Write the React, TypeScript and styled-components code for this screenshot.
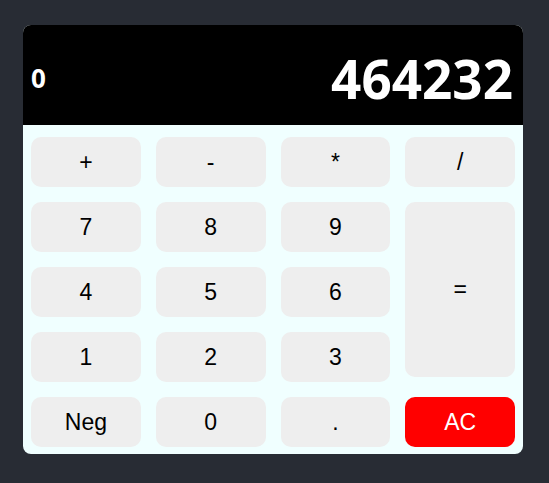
import { useState } from "react";
import styled, { createGlobalStyle } from "styled-components";

const GlobalStyle = createGlobalStyle`
  body {
    margin: 0;
    background-color: #282c34;
    font-family: "Liberation Sans", Arial, sans-serif;
  }
`;

const Page = styled.div`
  min-height: 483px;
  padding: 25px 0 0 23px;
  box-sizing: border-box;
`;

const Calculator = styled.div`
  width: 500px;
  border-radius: 8px;
  overflow: hidden;
  background-color: azure;
`;

const Display = styled.div`
  height: 100px;
  background-color: black;
  color: white;
  display: flex;
  align-items: center;
  justify-content: space-between;
  padding: 6px 10px 0 8px;
  box-sizing: border-box;
  font-family: "Noto Sans", "Open Sans", sans-serif;
  font-weight: bold;
`;

const Previous = styled.span`
  font-size: 26px;
`;

const Current = styled.span`
  font-size: 53px;
`;

const Keypad = styled.div`
  display: grid;
  grid-template-columns: repeat(4, 1fr);
  grid-auto-rows: 50px;
  column-gap: 15px;
  row-gap: 15px;
  padding: 12px 8px 7px 8px;
`;

const Key = styled.button<{ $accent?: boolean; $tall?: boolean }>`
  border: none;
  border-radius: 10px;
  background-color: ${(p) => (p.$accent ? "#ff0000" : "#eeeeee")};
  color: ${(p) => (p.$accent ? "white" : "black")};
  font-family: "Liberation Sans", Arial, sans-serif;
  font-size: 23px;
  cursor: pointer;
  grid-row: ${(p) => (p.$tall ? "span 3" : "auto")};
  height: ${(p) => (p.$tall ? "175px" : "50px")};
  align-self: start;
`;

function App() {
  const [previous, setPrevious] = useState("0");
  const [current, setCurrent] = useState("464232");

  const press = (key: string) => {
    if (key === "AC") {
      setPrevious("0");
      setCurrent("0");
      return;
    }
    if (key === "Neg") {
      setCurrent(current.startsWith("-") ? current.slice(1) : "-" + current);
      return;
    }
    if (key === "=") {
      setPrevious(current);
      return;
    }
    setCurrent(current === "0" ? key : current + key);
  };

  return (
    <>
      <GlobalStyle />
      <Page>
        <Calculator>
          <Display>
            <Previous>{previous}</Previous>
            <Current>{current}</Current>
          </Display>
          <Keypad>
            <Key onClick={() => press("+")}>+</Key>
            <Key onClick={() => press("-")}>-</Key>
            <Key onClick={() => press("*")}>*</Key>
            <Key onClick={() => press("/")}>/</Key>
            <Key onClick={() => press("7")}>7</Key>
            <Key onClick={() => press("8")}>8</Key>
            <Key onClick={() => press("9")}>9</Key>
            <Key $tall onClick={() => press("=")}>
              =
            </Key>
            <Key onClick={() => press("4")}>4</Key>
            <Key onClick={() => press("5")}>5</Key>
            <Key onClick={() => press("6")}>6</Key>
            <Key onClick={() => press("1")}>1</Key>
            <Key onClick={() => press("2")}>2</Key>
            <Key onClick={() => press("3")}>3</Key>
            <Key onClick={() => press("Neg")}>Neg</Key>
            <Key onClick={() => press("0")}>0</Key>
            <Key onClick={() => press(".")}>.</Key>
            <Key $accent onClick={() => press("AC")}>
              AC
            </Key>
          </Keypad>
        </Calculator>
      </Page>
    </>
  );
}

export default App;
